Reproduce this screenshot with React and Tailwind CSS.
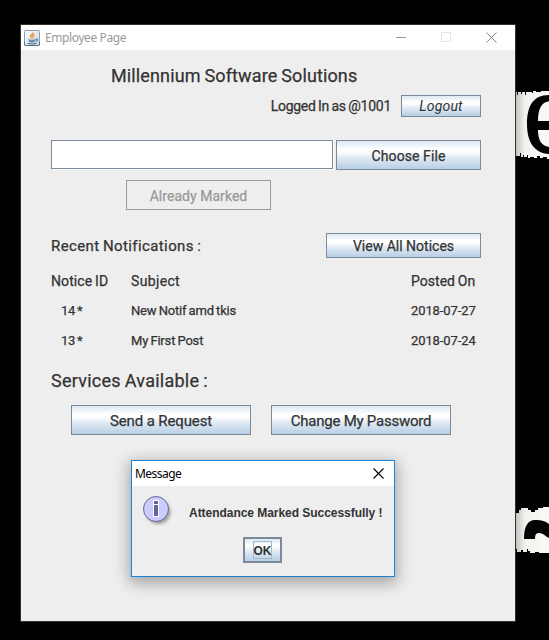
const metal =
  'flex items-center justify-center border border-[#7a8a99] pt-[2px] bg-[linear-gradient(to_bottom,#dde8f3_0%,#ffffff_30%,#ffffff_38%,#dde8f3_62%,#b8cfe5_100%)]';

function JavaIcon() {
  return (
    <svg className="h-4 w-4 shrink-0" viewBox="0 0 16 16" fill="none">
      <defs>
        <linearGradient id="javaTile" x1="0" y1="0" x2="1" y2="1">
          <stop offset="0" stopColor="#ffffff" />
          <stop offset="1" stopColor="#ccd5de" />
        </linearGradient>
      </defs>
      <rect x="0.5" y="0.5" width="15" height="15" rx="1" fill="url(#javaTile)" stroke="#86a0b6" />
      <path d="M0.5 12v2.500q0 1 1 1h13q1 0 1-1V12" stroke="#496d8c" />
      <path d="M8.900 2.500c.7 2-3 2.600-2.500 4.100.2.800 1 1.300 1.300 1.800M10.600 4.500c-1.500.6-2.200 1.200-1.500 2.200.4.700 0 1.200-.4 1.600" stroke="#ec8a2c" strokeWidth="1.300" />
      <path d="M4.300 9.700c2 .6 5.500.5 7.200 0M5 11.500c2 .5 4.200.4 5.700 0M3.500 13.300c3 .8 7.500.6 9-.3M11.800 9.200c2.200-.5 2.200 1.500 0 2" stroke="#466f95" strokeWidth="1.100" />
    </svg>
  );
}

function InfoIcon() {
  return (
    <svg className="h-8 w-8 shrink-0" viewBox="0 0 32 32">
      <defs>
        <radialGradient id="infoShade">
          <stop offset="0.72" stopColor="#888" stopOpacity="0.7" />
          <stop offset="1" stopColor="#aaa" stopOpacity="0" />
        </radialGradient>
      </defs>
      <circle cx="15.500" cy="16" r="14.500" fill="url(#infoShade)" />
      <circle cx="13" cy="13" r="12.500" fill="#ccccff" stroke="#666699" />
      <path d="M10 4h6v4h-6zM10 8h6v13h-6z" fill="#fff" />
      <path d="M11 5h4v3h-4zM11 9h4v11h-4z" fill="#666699" />
    </svg>
  );
}

function Backdrop() {
  return (
    <svg className="absolute left-[515px] top-0 h-[640px] w-[34px]" viewBox="0 0 34 640">
      <defs>
        <linearGradient id="paper" x1="0" x2="1" y1="0" y2="0">
          <stop offset="0" stopColor="#bdbdbb" />
          <stop offset="0.3" stopColor="#f3f2ef" />
          <stop offset="1" stopColor="#fbfaf8" />
        </linearGradient>
      </defs>
      <path d="M0 92h2v3h1v-3h3v2h1v-2h3v3h1v-3h6v1h1v-2h3v1h5v-1h8v68h-2v-2h-4v1h-3v-2h-3v2h-3v-1h-4v1h-2v-3h-1v2h-3v-2h-1v2h-2v-4h-1v3h-4z" fill="url(#paper)" />
      <path d="M36 95C18 94 12 106 12 124C12 143 20 154 36 154V147C27 147 23 141 23 130H36V121H23C23 108 27 101 36 101Z" fill="#020202" />
      <path d="M0 508h1v5h3v-3h2v-2h7v2h3v2h4v-2h3v-2h5v-1h6v46H24v-1h-4v1h-5v-2h-2v-2h-1v3H8v-2H6v2H2v-3H0z" fill="url(#paper)" />
      <path d="M9 539C9 526 13 520 20 520C27 520 30 521 34 524V538C30 536 28 533 24 533C21 533 20 535 20 539Z" fill="#060303" />
    </svg>
  );
}

function Notice({ id, subject, date }) {
  return (
    <div className="flex h-[30px] items-center text-[13px]">
      <span className="flex w-[80px] pl-[10px] tracking-[-0.4px]"><span className="w-[16px]">{id}</span>*</span>
      <span className="w-[280px] tracking-[-0.18px]">{subject}</span>
      <span className="tracking-[-0.1px]">{date}</span>
    </div>
  );
}

function MessageDialog() {
  return (
    <div className="absolute left-[131px] top-[460px] flex h-[117px] w-[264px] flex-col border border-[#1883d7] bg-[#eeeeee] shadow-[0_4px_14px_2px_rgba(0,0,0,0.32)]">
      <div className="flex h-[25px] items-center justify-between bg-white pl-[3px] pr-[10px] font-['Noto_Sans',sans-serif] text-[12px] font-normal text-black">
        <span className="tracking-[-0.55px]">Message</span>
        <svg className="h-[11px] w-[11px]" viewBox="0 0 11 11"><path d="M.5.5l10 10M10.500.5l-10 10" stroke="#000" strokeWidth="1.100" /></svg>
      </div>
      <div className="flex h-[51px] items-start pl-[11px] pt-[10px] font-['Liberation_Sans',Arial,sans-serif] text-[12px] font-bold text-[#333]">
        <InfoIcon />
        <span className="ml-[14px] mt-[9px] whitespace-nowrap leading-[16px] tracking-[-0.04px]">Attendance Marked Successfully !</span>
      </div>
      <button className="ml-[111px] flex h-[26px] w-[39px] items-center justify-center border-2 border-[#7a8a99] bg-[linear-gradient(to_bottom,#dde8f3_0%,#ffffff_30%,#dde8f3_60%,#b8cfe5_100%)] font-['Liberation_Sans',Arial,sans-serif] text-[12px] font-bold text-[#333]">
        <span className="flex h-[18px] w-[19px] items-center justify-center border border-[#a3b8cc] pt-px">OK</span>
      </button>
    </div>
  );
}

export default function App() {
  return (
    <div className="relative h-[640px] w-[549px] overflow-hidden bg-black font-['Roboto',sans-serif] font-normal text-[#333]">
      <Backdrop />
      <main className="absolute left-[20px] top-[24px] flex h-[598px] w-[496px] flex-col whitespace-nowrap border border-[#303030] bg-[#eeeeee]">
        <header className="flex h-[25px] items-center bg-white pl-[3px] pr-[18px] font-['Noto_Sans',sans-serif] text-[12px] text-[#999]">
          <JavaIcon />
          <span className="ml-[5px] flex-1 tracking-[-0.4px]">Employee Page</span>
          <svg className="h-[11px] w-[101px]" viewBox="0 0 101 11" fill="none">
            <path d="M0 5.500h10" stroke="#999" />
            <path d="M45.500 .5h9v9h-9z" stroke="#e5e5e5" />
            <path d="M90.500 .5l10 10M100.500 .5l-10 10" stroke="#888" />
          </svg>
        </header>
        <div className="flex flex-col px-[30px] [-webkit-text-stroke:0.25px] [word-spacing:-0.8px]">
          <h1 className="mt-[14px] pl-[60px] text-[18px] leading-[24px] tracking-[0.13px]">Millennium Software Solutions</h1>
          <div className="mt-[7px] flex h-[22px] items-center justify-end pr-[4px]">
            <span className="mr-[10px] pt-px text-[14px] tracking-[-0.26px]">Logged In as @1001</span>
            <button className="flex h-[22px] w-[80px] items-center justify-center border border-[#7a8a99] bg-[linear-gradient(to_bottom,#dde8f3_0%,#ffffff_30%,#ffffff_38%,#dde8f3_62%,#b8cfe5_100%)] text-[14px] italic tracking-[0.15px] [-webkit-text-stroke:0px]">Logout</button>
          </div>
          <div className="mt-[23px] flex h-[30px] gap-[3px]">
            <div className="h-[29px] w-[282px] border border-[#7a8a99] bg-white shadow-[1px_1px_0_#fff]" />
            <button className={metal + ' h-[30px] w-[145px] text-[14px] tracking-[0.09px]'}>Choose File</button>
          </div>
          <button className="ml-[75px] mt-[10px] h-[30px] w-[145px] border border-[#999] pt-[2px] text-[14px] tracking-[0.04px] text-[#999]">Already Marked</button>
          <div className="mt-[23px] flex h-[25px] items-center justify-between pr-[4px]">
            <h2 className="pt-[2px] text-[15px] tracking-[0.4px]">Recent Notifications :</h2>
            <button className={metal + ' h-[25px] w-[155px] text-[14px]'}>View All Notices</button>
          </div>
          <div className="mt-[13px] flex h-[20px] items-center text-[14px]">
            <span className="w-[80px] tracking-[0.1px]">Notice ID</span>
            <span className="w-[280px] tracking-[0.35px]">Subject</span>
            <span className="tracking-[0.03px]">Posted On</span>
          </div>
          <div className="mt-[5px]">
            <Notice id="14" subject="New Notif amd tkis" date="2018-07-27" />
            <Notice id="13" subject="My First Post" date="2018-07-24" />
          </div>
          <h2 className="mt-[13px] text-[18px] leading-[24px] tracking-[0.25px]">Services Available :</h2>
          <div className="mt-[12px] flex gap-[20px] pl-[20px]">
            <button className={metal + ' h-[30px] w-[180px] text-[15px] tracking-[-0.12px]'}>Send a Request</button>
            <button className={metal + ' h-[30px] w-[180px] text-[15px] tracking-[-0.23px]'}>Change My Password</button>
          </div>
        </div>
      </main>
      <MessageDialog />
    </div>
  );
}
